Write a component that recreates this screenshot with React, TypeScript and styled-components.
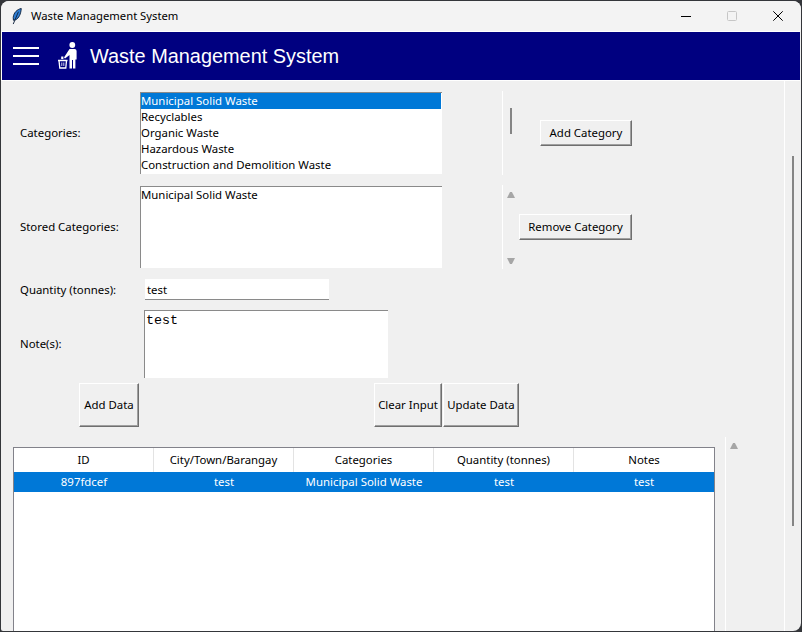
import React from "react";
import styled, { createGlobalStyle } from "styled-components";

/* ---------------- base ---------------- */

const UI_FONT = `"Noto Sans", "Open Sans", sans-serif`;

const Global = createGlobalStyle`
  html, body {
    margin: 0;
    width: 802px;
    height: 632px;
    overflow: hidden;
    background: #34363a;
  }
`;

const Screen = styled.div`
  box-sizing: border-box;
  width: 802px;
  height: 632px;
  padding: 1px;
`;

const Window = styled.div`
  display: flex;
  flex-direction: column;
  height: 100%;
  overflow: hidden;
  border-radius: 8px 8px 8px 2px;
  background: #f0f0f0;
  font: 11.4px/16px ${UI_FONT};
  color: #000;
`;

/* ---------------- title bar ---------------- */

const TitleBar = styled.div`
  flex: none;
  display: flex;
  align-items: center;
  height: 30px;
  padding-left: 11px;
  background: #f3f3f3;
`;

const AppName = styled.span`
  margin-left: 9px;
  font-size: 11.25px;
`;

const Controls = styled.div`
  display: flex;
  margin-left: auto;
`;

const Control = styled.div`
  display: flex;
  align-items: center;
  justify-content: center;
  width: 46px;
  height: 30px;
`;

/* ---------------- banner ---------------- */

const Banner = styled.div`
  flex: none;
  display: flex;
  align-items: center;
  box-sizing: border-box;
  height: 50px;
  margin-right: 1px;
  padding: 0 0 1px 11px;
  border: 1px solid #fff;
  border-right: 0;
  background: #000080;
`;

const Burger = styled.div`
  display: flex;
  flex-direction: column;
  gap: 6px;
  width: 26px;

  span {
    height: 2px;
    background: #fff;
  }
`;

const BannerIcon = styled.svg`
  margin-left: 17px;
`;

const BannerTitle = styled.h1`
  margin: 0 0 0 12px;
  font: 400 19.9px/28px "Liberation Sans", Arial, sans-serif;
  color: #fff;
`;

/* ---------------- page ---------------- */

const Body = styled.div`
  flex: 1;
  min-height: 0;
  display: flex;
`;

const Content = styled.div`
  flex: 1;
  min-width: 0;
  overflow: hidden;
  padding-top: 10px;
`;

const PageScroll = styled.div`
  flex: none;
  box-sizing: border-box;
  width: 17px;
  padding: 75px 0 0 7px;
  border-left: 1px solid #fff;
`;

const PageThumb = styled.div`
  width: 2px;
  height: 370px;
  background: #858585;
`;

/* ---------------- form ---------------- */

const COLUMNS = "120px 302px 77px 113px";

const FormGrid = styled.div`
  display: grid;
  grid-template-columns: ${COLUMNS};
  grid-template-rows: 84px 84px 21px 68px;
  row-gap: 10px;
  padding-left: 19px;
`;

const ActionGrid = styled.div`
  display: grid;
  grid-template-columns: ${COLUMNS};
  margin-top: 5px;
  padding-left: 19px;
`;

const Label = styled.div`
  align-self: center;
`;

const ListBox = styled.div`
  box-sizing: border-box;
  height: 82px;
  align-self: center;
  padding-right: 1px;
  border-top: 1px solid #8a8a8a;
  border-left: 1px solid #8a8a8a;
  background: #fff;
`;

const ListItem = styled.div<{ $selected?: boolean }>`
  height: 16px;
  white-space: nowrap;
  background: ${(p) => (p.$selected ? "#0078d7" : "transparent")};
  color: ${(p) => (p.$selected ? "#fff" : "#000")};
`;

const ListScroll = styled.div`
  display: flex;
  flex-direction: column;
  box-sizing: border-box;
  width: 17px;
  margin-left: 60px;
  border-left: 1px solid #fff;
`;

const ListThumb = styled.div`
  width: 2px;
  height: 26px;
  margin: 17px 0 0 7px;
  background: #858585;
`;

const ArrowStack = styled.div`
  flex: 1;
  display: flex;
  flex-direction: column;
  justify-content: space-between;
  padding: 7px 0 5px 4px;
`;

const Arrow = styled.div<{ $down?: boolean }>`
  width: 8px;
  height: 6px;
  background: #a6a6a6;
  clip-path: ${(p) =>
    p.$down
      ? "polygon(0 0, 100% 0, 62% 100%, 38% 100%)"
      : "polygon(38% 0, 62% 0, 100% 100%, 0 100%)"};
`;

const TkButton = styled.button`
  box-sizing: border-box;
  padding: 0;
  border: 1px solid;
  border-color: #fff #6f6f6f #6f6f6f #fff;
  box-shadow: inset -1px -1px 0 #a0a0a0;
  background: #f0f0f0;
  font: inherit;
  color: #000;
  white-space: nowrap;
  justify-self: end;
`;

const CategoryButton = styled(TkButton)<{ $width: number }>`
  width: ${(p) => p.$width}px;
  height: 26px;
  align-self: center;
`;

const ActionButton = styled(TkButton)<{ $width: number; $inset?: number }>`
  width: ${(p) => p.$width}px;
  height: 44px;
  margin-right: ${(p) => p.$inset ?? 0}px;
`;

const QuantityInput = styled.div`
  box-sizing: border-box;
  width: 184px;
  height: 21px;
  margin-left: 5px;
  padding: 3px 0 0 2px;
  border-bottom: 1px solid #8a8a8a;
  background: #fff;
`;

const NotesInput = styled.div`
  box-sizing: border-box;
  width: 244px;
  margin-left: 4px;
  padding: 2px 0 0 1px;
  border-top: 1px solid #8a8a8a;
  border-left: 1px solid #8a8a8a;
  background: #fff;
  font: 13.33px/16px "Liberation Mono", "Courier New", monospace;
`;

/* ---------------- table ---------------- */

const TableRow = styled.div`
  display: flex;
  margin: 10px 0 0 12px;
`;

const Table = styled.div`
  flex: none;
  box-sizing: border-box;
  width: 702px;
  height: 195px;
  margin-top: 10px;
  border: 1px solid #82828a;
  background: #fff;
`;

const HeadRow = styled.div`
  display: grid;
  grid-template-columns: repeat(5, 140px);
  height: 24px;
`;

const HeadCell = styled.div`
  box-sizing: border-box;
  line-height: 23px;
  text-align: center;
  border-right: 1px solid #e3e3e3;

  &:last-child {
    border-right: 0;
  }
`;

const DataRow = styled.div<{ $selected?: boolean }>`
  display: grid;
  grid-template-columns: repeat(5, 140px);
  height: 20px;
  background: ${(p) => (p.$selected ? "#0078d7" : "#fff")};
  color: ${(p) => (p.$selected ? "#fff" : "#000")};
`;

const DataCell = styled.div`
  line-height: 20px;
  text-align: center;
  white-space: nowrap;
`;

const TableScroll = styled.div`
  width: 17px;
  margin-left: 10px;
  padding: 6px 0 0 4px;
  border-left: 1px solid #fff;
`;

/* ---------------- data ---------------- */

const CATEGORIES = [
  "Municipal Solid Waste",
  "Recyclables",
  "Organic Waste",
  "Hazardous Waste",
  "Construction and Demolition Waste",
];

const COLUMN_NAMES = ["ID", "City/Town/Barangay", "Categories", "Quantity (tonnes)", "Notes"];
const RECORD = ["897fdcef", "test", "Municipal Solid Waste", "test", "test"];

/* ---------------- page ---------------- */

export default function App() {
  return (
    <Screen>
      <Global />
      <Window>
        <TitleBar>
          <svg width="10" height="17" viewBox="0 0 10 18">
            <path d="M9.5 0.5C5 1.5 1.5 5 1 10L1.2 13L3.5 12.5C7 11 9.2 6 9.5 0.5Z" fill="#2f7fd6" stroke="#10223c" strokeWidth="1" />
            <path d="M6.5 4L1 17" stroke="#10223c" strokeWidth="1" fill="none" />
          </svg>
          <AppName>Waste Management System</AppName>
          <Controls>
            <Control>
              <svg width="10" height="10" viewBox="0 0 10 10">
                <path d="M0 5.5H10" stroke="#000" strokeWidth="1" />
              </svg>
            </Control>
            <Control>
              <svg width="10" height="10" viewBox="0 0 10 10">
                <rect x="0.5" y="0.5" width="9" height="9" rx="1" fill="none" stroke="#c6c6c6" />
              </svg>
            </Control>
            <Control>
              <svg width="10" height="10" viewBox="0 0 10 10">
                <path d="M0.3 0.3L9.7 9.7M9.7 0.3L0.3 9.7" stroke="#000" strokeWidth="1" />
              </svg>
            </Control>
          </Controls>
        </TitleBar>

        <Banner>
          <Burger>
            <span />
            <span />
            <span />
          </Burger>
          <BannerIcon width="22" height="28" viewBox="0 0 22 28" fill="#fff">
            <circle cx="16.3" cy="3" r="2.9" />
            <path d="M13.5 7H18.5Q20.6 7 20.6 9V17.5H19.4V26.5H17V18H16V26.5H13.5V13L9 16.6L8 15.4Z" />
            <path d="M2 18.5H11.5M3 18.5L3.8 26H9.8L10.5 18.5" fill="none" stroke="#fff" strokeWidth="1.3" />
            <rect x="5.2" y="14.5" width="2.2" height="2.6" />
            <path d="M5.8 20.5V24M7.8 20.5V24" stroke="#fff" strokeWidth="0.8" />
          </BannerIcon>
          <BannerTitle>Waste Management System</BannerTitle>
        </Banner>

        <Body>
          <Content>
            <FormGrid>
              <Label>Categories:</Label>
              <ListBox>
                {CATEGORIES.map((name, i) => (
                  <ListItem key={name} $selected={i === 0}>
                    {name}
                  </ListItem>
                ))}
              </ListBox>
              <ListScroll>
                <ListThumb />
              </ListScroll>
              <CategoryButton $width={92}>Add Category</CategoryButton>

              <Label>Stored Categories:</Label>
              <ListBox>
                <ListItem>Municipal Solid Waste</ListItem>
              </ListBox>
              <ListScroll>
                <ArrowStack>
                  <Arrow />
                  <Arrow $down />
                </ArrowStack>
              </ListScroll>
              <CategoryButton $width={113}>Remove Category</CategoryButton>

              <Label>Quantity (tonnes):</Label>
              <QuantityInput>test</QuantityInput>
              <div />
              <div />

              <Label>Note(s):</Label>
              <NotesInput>test</NotesInput>
              <div />
              <div />
            </FormGrid>

            <ActionGrid>
              <ActionButton $width={60} $inset={1}>Add Data</ActionButton>
              <ActionButton $width={68}>Clear Input</ActionButton>
              <ActionButton $width={76}>Update Data</ActionButton>
            </ActionGrid>

            <TableRow>
              <Table>
                <HeadRow>
                  {COLUMN_NAMES.map((name) => (
                    <HeadCell key={name}>{name}</HeadCell>
                  ))}
                </HeadRow>
                <DataRow $selected>
                  {RECORD.map((value, i) => (
                    <DataCell key={i}>{value}</DataCell>
                  ))}
                </DataRow>
              </Table>
              <TableScroll>
                <Arrow />
              </TableScroll>
            </TableRow>
          </Content>
          <PageScroll>
            <PageThumb />
          </PageScroll>
        </Body>
      </Window>
    </Screen>
  );
}
